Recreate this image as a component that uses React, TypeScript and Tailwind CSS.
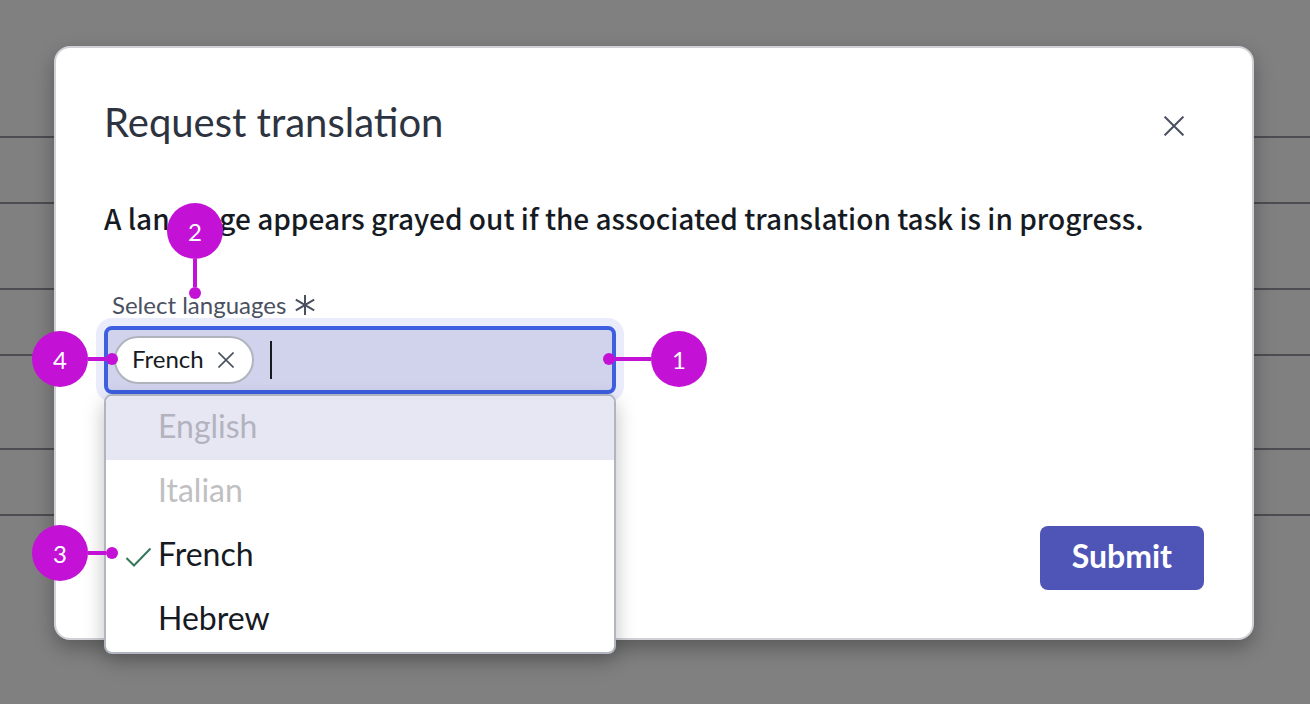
import React from 'react';

type Language = {
  name: string;
  disabled?: boolean;
  selected?: boolean;
  active?: boolean;
};

const languages: Language[] = [
  { name: 'English', disabled: true, active: true },
  { name: 'Italian', disabled: true },
  { name: 'French', selected: true },
  { name: 'Hebrew' },
];

const optionColor = (language: Language) => {
  if (language.active) return 'bg-[#e7e7f3] text-[#b3b3bf]';
  if (language.disabled) return 'text-[#c0c0c2]';
  return 'text-[#161b23]';
};

const CloseIcon: React.FC<{ className: string }> = ({ className }) => (
  <svg className={className} viewBox="0 0 20 20" fill="none" stroke="currentColor" strokeWidth="2" aria-hidden="true">
    <path d="M0.6 0.6l18.8 18.8M19.4 0.6L0.6 19.4" />
  </svg>
);

/* Numbered marker with a stem that ends in a dot */
const Callout: React.FC<{ label: string; stem: 'left' | 'right' | 'down'; className: string }> = ({ label, stem, className }) => {
  const direction = stem === 'left' ? 'flex-row-reverse' : stem === 'right' ? 'flex-row' : 'flex-col';
  const line = stem === 'left' ? 'h-1 w-9' : stem === 'right' ? 'h-1 w-[18px]' : 'h-7 w-1';
  return (
    <div className={`absolute z-20 flex items-center ${direction} ${className}`}>
      <span className="flex size-14 items-center justify-center rounded-full bg-[#c411d6] pt-0.5 text-2xl text-white">{label}</span>
      <span className={`bg-[#c411d6] ${line}`} />
      <span className="size-3 rounded-full bg-[#c411d6]" />
    </div>
  );
};

const App: React.FC = () => {
  return (
    <div className="relative min-h-screen overflow-hidden bg-[#808080] px-[54px] pt-[46px] pb-16 font-['Lato','Liberation_Sans',sans-serif]">
      {/* Dimmed page rows */}
      <div className="absolute inset-x-0 top-0" aria-hidden="true">
        <div className="h-[138px] border-b-2 border-[#4c4c53]" />
        <div className="h-[66px] border-b-2 border-[#4c4c53]" />
        <div className="h-[86px] border-b-2 border-[#4c4c53]" />
        <div className="h-[66px] border-b-2 border-[#4c4c53]" />
        <div className="h-[94px] border-b-2 border-[#4c4c53]" />
        <div className="h-[66px] border-b-2 border-[#4c4c53]" />
      </div>

      <section
        role="dialog"
        aria-labelledby="dialog-title"
        className="relative mr-0.5 rounded-2xl border-2 border-[#d0d0d7] bg-white p-12 shadow-[0_8px_20px_rgba(0,0,0,0.3)]"
      >
        <header className="flex items-center justify-between">
          <h1 id="dialog-title" className="pb-2 text-[40px] leading-[52px] text-[#2e3340]">Request translation</h1>
          <button type="button" aria-label="Close" className="flex size-[60px] items-center justify-center text-[#4a5060]">
            <CloseIcon className="size-5" />
          </button>
        </header>

        <p className="mt-[42px] font-['Noto_Sans_CJK_SC',sans-serif] text-[28px] leading-10 font-medium text-[#161b23]">
          A language appears grayed out if the associated translation task is in progress.
        </p>

        {/* Language picker */}
        <div className="mt-[51px] w-[512px]">
          <label htmlFor="languages" className="relative z-10 flex items-center gap-[9px] pl-2 text-2xl leading-8 text-[#4a5060]">
            Select languages
            <svg className="size-5" viewBox="0 0 20 20" fill="none" stroke="currentColor" strokeWidth="2" aria-hidden="true">
              <path d="M10 0v20M0.8 4.6l18.4 10.8M19.2 4.6L0.8 15.4" />
            </svg>
          </label>

          <div className="relative mt-[5px]">
            <div className="flex h-[68px] items-center rounded-lg border-4 border-[#3d5fe0] bg-[#d1d2ec] px-1.5 shadow-[0_0_0_8px_#ebecfb]">
              <span className="flex h-12 shrink-0 items-center gap-3.5 rounded-full border-2 border-[#b0b5bd] bg-white pr-[18px] pb-0.5 pl-4 text-2xl text-[#161b23]">
                French
                <button type="button" aria-label="Remove French" className="pt-0.5 text-[#4a5060]">
                  <CloseIcon className="size-4" />
                </button>
              </span>
              <span className="ml-4 h-[38px] w-0.5 shrink-0 bg-[#161b23]" />
              <input
                id="languages"
                type="text"
                role="combobox"
                aria-expanded="true"
                aria-controls="language-list"
                className="min-w-0 flex-1 bg-transparent text-2xl outline-none"
              />
            </div>

            <ul
              id="language-list"
              role="listbox"
              aria-label="Languages"
              className="absolute inset-x-0 top-full z-10 overflow-hidden rounded-lg border-2 border-[#b0b5bf] bg-white shadow-[0_8px_20px_rgba(0,0,0,0.25)]"
            >
              {languages.map((language) => (
                <li
                  key={language.name}
                  role="option"
                  aria-selected={!!language.selected}
                  aria-disabled={!!language.disabled}
                  className={`flex h-16 items-center pb-1 pl-5 text-[32px] leading-10 ${optionColor(language)}`}
                >
                  <span className="w-8">
                    {language.selected && (
                      <svg className="mt-1.5 h-5 w-[26px]" viewBox="0 0 26 20" fill="none" stroke="#35785a" strokeWidth="2" aria-hidden="true">
                        <path d="M0.5 11l7.5 7.5L24.5 1.5" />
                      </svg>
                    )}
                  </span>
                  {language.name}
                </li>
              ))}
            </ul>

            <Callout label="1" stem="left" className="top-[5px] left-[499px]" />
            <Callout label="2" stem="down" className="top-[-123px] left-[63px]" />
            <Callout label="3" stem="right" className="top-[199px] left-[-72px]" />
            <Callout label="4" stem="right" className="top-[5px] left-[-72px]" />
          </div>
        </div>

        <div className="mt-[132px] flex justify-end">
          <button type="button" className="h-16 rounded-lg bg-[#4f55b7] px-8 pb-1 text-[32px] leading-10 font-bold text-white">
            Submit
          </button>
        </div>
      </section>
    </div>
  );
};

export default App;
